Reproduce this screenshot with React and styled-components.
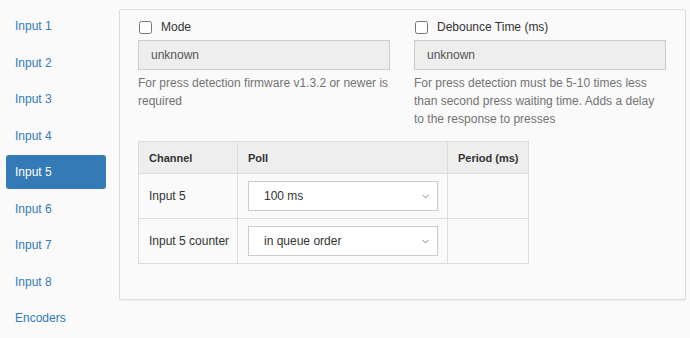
import React from "react";
import styled, { createGlobalStyle } from "styled-components";
import { ChevronDown } from "lucide-react";

const GlobalStyle = createGlobalStyle`
  body {
    margin: 0;
    background: #fafafa;
    font-family: "Liberation Sans", Arial, sans-serif;
    font-size: 12px;
    color: #333;
  }
`;

const Page = styled.div`
  display: flex;
  align-items: flex-start;
`;

const Nav = styled.ul`
  list-style: none;
  margin: 0;
  padding: 9px 0 0 6px;
  width: 100px;
  flex-shrink: 0;
`;

const NavItem = styled.li`
  height: 34px;
  line-height: 35px;
  margin-bottom: 2.5px;
  padding-left: 9px;
  border-radius: 3px;
  color: ${(p) => (p.$active ? "#fff" : "#337ab7")};
  background: ${(p) => (p.$active ? "#337ab7" : "transparent")};
  cursor: pointer;
`;

const Panel = styled.div`
  margin: 9px 0 0 13px;
  width: 529px;
  padding: 9px 18px 35px;
  border: 1px solid #ddd;
  border-radius: 2px;
  box-shadow: 0 1px 1px rgba(0, 0, 0, 0.05);
`;

const Row = styled.div`
  display: grid;
  grid-template-columns: 252px 252px;
  column-gap: 24px;
`;

const Label = styled.label`
  display: flex;
  align-items: center;
  gap: 9px;
  height: 16px;
  margin: 0 0 5px 1px;
`;

const Check = styled.input`
  width: 13px;
  height: 13px;
  margin: 0;
`;

const Field = styled.div`
  box-sizing: border-box;
  height: 30px;
  line-height: 28px;
  padding: 0 12px;
  background: #eee;
  border: 1px solid #ccc;
  color: #555;
`;

const Help = styled.p`
  margin: 4px 0 0;
  line-height: 18px;
  color: #737373;
`;

const Table = styled.table`
  margin: 13px 0 0 0;
  border-collapse: collapse;
  table-layout: fixed;
  width: 390px;
`;

const Th = styled.th`
  text-align: left;
  font-weight: bold;
  font-size: 11px;
  white-space: nowrap;
  height: 32px;
  padding: 0 8px 0 10px;
  background: #eee;
  border: 1px solid #ddd;
  width: ${(p) => p.$w}px;
  box-sizing: border-box;
`;

const Td = styled.td`
  height: 45px;
  padding: 0 6px 0 10px;
  white-space: nowrap;
  border: 1px solid #ddd;
  box-sizing: border-box;
`;

const SelectBox = styled.div`
  position: relative;
  box-sizing: border-box;
  width: 190px;
  height: 30px;
  line-height: 28px;
  padding: 0 15px;
  background: #fff;
  border: 1px solid #ccc;
  color: #333;

  svg {
    position: absolute;
    right: 6px;
    top: 9px;
  }
`;

const items = ["Input 1", "Input 2", "Input 3", "Input 4", "Input 5", "Input 6", "Input 7", "Input 8", "Encoders"];

const Select = ({ value }) => (
  <SelectBox>
    {value}
    <ChevronDown size={11} color="#555" strokeWidth={1.5} />
  </SelectBox>
);

export default function App() {
  return (
    <>
      <GlobalStyle />
      <Page>
        <Nav>
          {items.map((it) => (
            <NavItem key={it} $active={it === "Input 5"}>
              {it}
            </NavItem>
          ))}
        </Nav>
        <Panel>
          <Row>
            <div>
              <Label>
                <Check type="checkbox" />
                Mode
              </Label>
              <Field>unknown</Field>
              <Help>For press detection firmware v1.3.2 or newer is required</Help>
            </div>
            <div>
              <Label>
                <Check type="checkbox" />
                Debounce Time (ms)
              </Label>
              <Field>unknown</Field>
              <Help>
                For press detection must be 5-10 times less than second press waiting time. Adds a
                delay to the response to presses
              </Help>
            </div>
          </Row>
          <Table>
            <thead>
              <tr>
                <Th $w={99}>Channel</Th>
                <Th $w={210}>Poll</Th>
                <Th $w={81}>Period (ms)</Th>
              </tr>
            </thead>
            <tbody>
              <tr>
                <Td>Input 5</Td>
                <Td>
                  <Select value="100 ms" />
                </Td>
                <Td />
              </tr>
              <tr>
                <Td>Input 5 counter</Td>
                <Td>
                  <Select value="in queue order" />
                </Td>
                <Td />
              </tr>
            </tbody>
          </Table>
        </Panel>
      </Page>
    </>
  );
}
